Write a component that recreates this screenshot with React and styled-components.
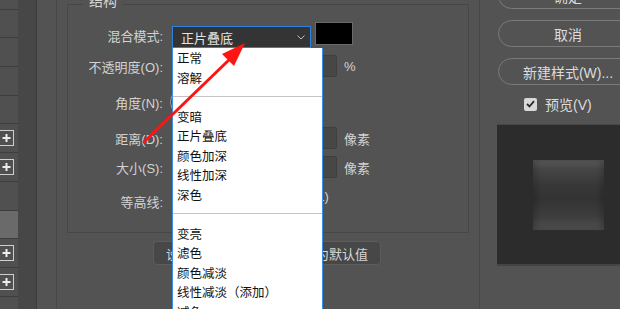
import React from 'react'
import styled, { createGlobalStyle } from 'styled-components'

const GlobalStyle = createGlobalStyle`
  html, body {
    margin: 0;
    padding: 0;
    background: #535353;
  }
  body {
    width: 620px;
    height: 309px;
    overflow: hidden;
    font-family: "Liberation Sans", "Noto Sans CJK SC", sans-serif;
    font-size: 13px;
    color: #d4d4d4;
  }
`

const Page = styled.div`
  position: relative;
  display: flex;
  width: 620px;
  height: 309px;
  overflow: hidden;
  background: #535353;
`

// far left layer list
const LayerList = styled.div`
  width: 18px;
  flex: none;
  display: flex;
  flex-direction: column;
  margin-top: -19px;
  background: #505050;
`
const LayerRow = styled.div`
  height: 28.7px;
  flex: none;
  box-sizing: border-box;
  border-bottom: 1px solid #3d3d3d;
  background: ${p => (p.$active ? '#6a6a6a' : '#505050')};
  display: flex;
  align-items: center;
  justify-content: flex-end;
  padding-right: 4px;
`
const PlusBox = styled.svg`
  width: 15px;
  height: 16px;
  flex: none;
  margin-left: -1px;
`
const Gutter = styled.div`
  width: 18px;
  flex: none;
  background: #474747;
  border-right: 1px solid #3c3c3c;
`
const SideColumn = styled.div`
  width: 19px;
  flex: none;
  background: #535353;
  border-right: 1px solid #474747;
`

// main settings area
const Main = styled.div`
  flex: none;
  width: 423px;
  box-sizing: border-box;
  border-right: 1px solid #474747;
  padding: 4px 0 0 10px;
  display: flex;
  flex-direction: column;
`
const Group = styled.div`
  position: relative;
  width: 402px;
  box-sizing: border-box;
  border: 1px solid #474747;
  padding: 17px 0 15px 0;
  display: flex;
  flex-direction: column;
  gap: 7px;
`
const Legend = styled.span`
  position: absolute;
  top: -12px;
  left: 15px;
  padding: 0 6px;
  background: #535353;
  font-size: 14px;
  color: #d8d8d8;
  line-height: 16px;
`
const Row = styled.div`
  display: flex;
  align-items: center;
  height: ${p => p.$h}px;
`
const Label = styled.div`
  width: 95px;
  flex: none;
  margin-right: 9px;
  text-align: right;
  white-space: nowrap;
  color: #d2d2d2;
  font-size: 13px;
`
const Controls = styled.div`
  display: flex;
  align-items: center;
  gap: 7px;
  height: 100%;
`
const SelectWrap = styled.div`
  position: relative;
  align-self: flex-end;
  width: 139px;
  height: 22px;
`
const Select = styled.div`
  box-sizing: border-box;
  width: 100%;
  height: 100%;
  background: #343434;
  border: 1px solid #2f7fdc;
  display: flex;
  align-items: center;
  justify-content: space-between;
  padding: 0 5px 0 8px;
  color: #e4e4e4;
  font-size: 13px;
`
const Swatch = styled.div`
  align-self: flex-start;
  width: 38px;
  height: 23px;
  box-sizing: border-box;
  background: #000;
  border: 1px solid #6a6a6a;
  margin-left: -3px;
`
const Menu = styled.div`
  position: absolute;
  top: 100%;
  left: 0;
  width: 151px;
  box-sizing: border-box;
  background: #fff;
  border-left: 1px solid #3a8ee6;
  border-right: 1px solid #3a8ee6;
  z-index: 5;
`
const MenuItem = styled.div`
  height: 19.5px;
  line-height: 19.5px;
  padding-left: 4px;
  color: #111;
  font-size: 12.5px;
  white-space: nowrap;
  font-family: "Noto Sans CJK SC", sans-serif;
`
const MenuSep = styled.div`
  height: 19.5px;
  display: flex;
  align-items: center;
  &::after {
    content: '';
    flex: 1;
    height: 1px;
    background: #c4c4c4;
  }
`
const Slider = styled.div`
  width: 108px;
  height: 3px;
  background: #3a3a3a;
`
const NumInput = styled.div`
  width: 50px;
  height: 22px;
  box-sizing: border-box;
  background: #474747;
  border: 1px solid #3f3f3f;
  border-radius: 2px;
`
const Unit = styled.span`
  color: #d2d2d2;
  font-size: 13px;
`
const Dial = styled.div`
  width: 30px;
  height: 30px;
  box-sizing: border-box;
  border-radius: 50%;
  border: 1px solid #9a9a9a;
  background: #474747;
  margin-left: -2px;
`
const Contour = styled.div`
  width: 44px;
  height: 30px;
  background: #3a3a3a;
  border: 1px solid #666;
  box-sizing: border-box;
`
const AntiAlias = styled.span`
  align-self: flex-start;
  margin: 1px 0 0 38px;
  color: #d2d2d2;
  font-size: 13px;
  white-space: nowrap;
`
const ButtonBar = styled.div`
  display: flex;
  gap: 20px;
  margin: 8px 0 0 86px;
`
const FlatButton = styled.div`
  width: 104px;
  height: 24px;
  box-sizing: border-box;
  border: 1px solid #5c5c5c;
  border-radius: 4px;
  background: #474747;
  display: flex;
  align-items: center;
  justify-content: center;
  color: #d6d6d6;
  font-size: 13px;
  white-space: nowrap;
`

// right panel
const RightPanel = styled.div`
  flex: none;
  width: 160px;
  padding-left: 18px;
  display: flex;
  flex-direction: column;
  margin-top: -18px;
`
const PillButton = styled.div`
  width: 140px;
  height: 27px;
  box-sizing: border-box;
  border: 1px solid #7a7a7a;
  border-radius: 14px;
  display: flex;
  align-items: center;
  justify-content: center;
  margin-bottom: 11px;
  color: #dcdcdc;
  font-size: 14px;
  white-space: nowrap;
`
const CheckRow = styled.label`
  display: flex;
  align-items: center;
  gap: 8px;
  height: 14px;
  margin: 1px 0 0 26px;
  color: #dcdcdc;
  font-size: 14px;
`
const CheckBox = styled.span`
  width: 13px;
  height: 13px;
  border-radius: 2px;
  background: #d8d8d8;
  display: flex;
  align-items: center;
  justify-content: center;
`
const Preview = styled.div`
  margin: 13px 0 0 -1px;
  width: 150px;
  height: 142px;
  box-sizing: border-box;
  background: #2c2c2c;
  border-top: 1px solid #474747;
  border-bottom: 2px solid #444;
  padding: 35px 0 0 36px;
`
const Sample = styled.div`
  width: 71px;
  height: 70px;
  background: linear-gradient(#5a5a5a 0%, #474747 12%, #383838 35%, #333 55%, #3d3d3d 80%, #4c4c4c 97%, #555 100%);
  box-shadow: inset 4px 0 5px rgba(0,0,0,0.15), inset -4px 0 5px rgba(0,0,0,0.15);
`

const Annotation = styled.svg`
  position: absolute;
  left: 0;
  top: 0;
  width: 620px;
  height: 309px;
  pointer-events: none;
  z-index: 10;
`

const layers = [0, 0, 0, 0, 0, 1, 1, 0, 2, 1, 1, 0]

const blendModes = [
  '正常', '溶解', '-', '变暗', '正片叠底', '颜色加深', '线性加深', '深色', '-',
  '变亮', '滤色', '颜色减淡', '线性减淡（添加）', '减色',
]

function Plus() {
  return (
    <PlusBox viewBox="0 0 15 16">
      <rect x="0.5" y="0.5" width="14" height="15" fill="none" stroke="#cfcfcf" />
      <path d="M3.5 8h8M7.5 4v8" stroke="#ececec" strokeWidth="2" />
    </PlusBox>
  )
}

export default function App() {
  return (
    <>
      <GlobalStyle />
      <Page>
        <LayerList>
          {layers.map((t, i) => (
            <LayerRow key={i} $active={t === 2}>
              {t === 1 && <Plus />}
            </LayerRow>
          ))}
        </LayerList>
        <Gutter />
        <SideColumn />
        <Main>
          <Group>
            <Legend>结构</Legend>
            <Row $h={26}>
              <Label>混合模式:</Label>
              <Controls>
                <SelectWrap>
                  <Select>
                    <span>正片叠底</span>
                    <svg width="8" height="5" viewBox="0 0 8 5">
                      <path d="M0.5 0.5l3.5 3.5 3.5-3.5" fill="none" stroke="#bbb" strokeWidth="1" />
                    </svg>
                  </Select>
                  <Menu>
                    {blendModes.map((m, i) =>
                      m === '-' ? <MenuSep key={i} /> : <MenuItem key={i}>{m}</MenuItem>
                    )}
                  </Menu>
                </SelectWrap>
                <Swatch />
              </Controls>
            </Row>
            <Row $h={22}>
              <Label>不透明度(O):</Label>
              <Controls>
                <Slider />
                <NumInput />
                <Unit>%</Unit>
              </Controls>
            </Row>
            <Row $h={36}>
              <Label>角度(N):</Label>
              <Controls>
                <Dial />
              </Controls>
            </Row>
            <Row $h={22}>
              <Label>距离(D):</Label>
              <Controls>
                <Slider />
                <NumInput />
                <Unit>像素</Unit>
              </Controls>
            </Row>
            <Row $h={22}>
              <Label>大小(S):</Label>
              <Controls>
                <Slider />
                <NumInput />
                <Unit>像素</Unit>
              </Controls>
            </Row>
            <Row $h={32}>
              <Label>等高线:</Label>
              <Controls>
                <Contour />
                <AntiAlias>消除锯齿(L)</AntiAlias>
              </Controls>
            </Row>
          </Group>
          <ButtonBar>
            <FlatButton>设置为默认值</FlatButton>
            <FlatButton>复位为默认值</FlatButton>
          </ButtonBar>
        </Main>
        <RightPanel>
          <PillButton>确定</PillButton>
          <PillButton>取消</PillButton>
          <PillButton>新建样式(W)...</PillButton>
          <CheckRow>
            <CheckBox>
              <svg width="9" height="8" viewBox="0 0 9 8">
                <path d="M1 4l2.5 2.5L8 1.2" fill="none" stroke="#2a2a2a" strokeWidth="1.8" />
              </svg>
            </CheckBox>
            预览(V)
          </CheckRow>
          <Preview>
            <Sample />
          </Preview>
        </RightPanel>
        <Annotation viewBox="0 0 620 309">
          <line x1="144" y1="142" x2="232" y2="57" stroke="#ff1414" strokeWidth="3" strokeLinecap="round" />
          <polygon points="245,43 222,54 234,66" fill="#ff1414" />
        </Annotation>
      </Page>
    </>
  )
}
